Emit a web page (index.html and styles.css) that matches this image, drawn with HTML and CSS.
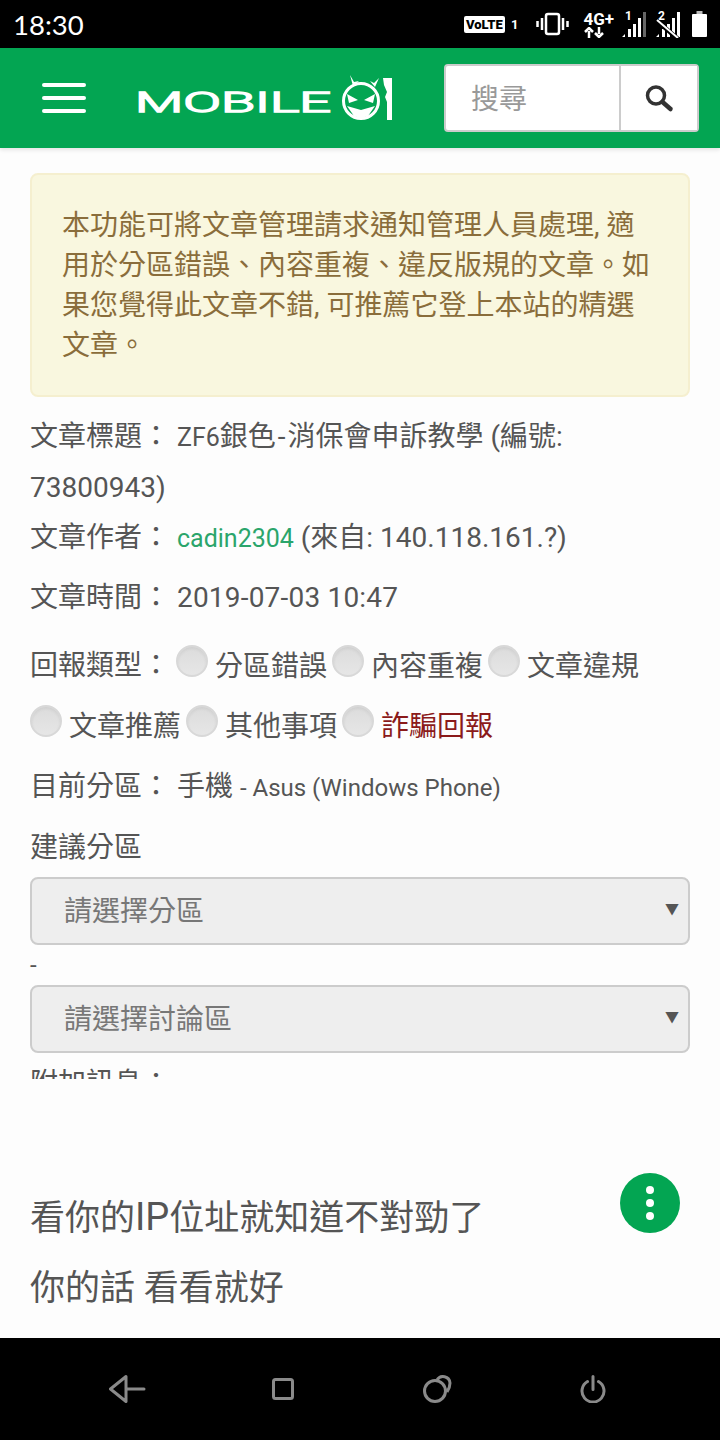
FILE: index.html
```html
<!DOCTYPE html>
<html lang="zh-Hant">
<head>
    <meta charset="UTF-8">
    <meta name="viewport" content="width=device-width, initial-scale=1.0">
    <title>文章回報</title>
    <link rel="stylesheet" href="styles.css">
</head>
<body>
    <div class="screen">
        <div class="status-bar">
            <span class="clock">18:30</span>
            <div class="status-icons">
                <span class="volte">VoLTE</span>
                <span class="sim">1</span>
                <svg class="vibrate" width="33" height="24" viewBox="0 0 33 24">
                    <rect x="10" y="2" width="13" height="20" rx="2" fill="none" stroke="#fff" stroke-width="2.5"/>
                    <path d="M6 6v12M1.500 9v6M27 6v12M31.500 9v6" stroke="#fff" stroke-width="2.500"/>
                </svg>
                <span class="net">
                    <span class="net-type">4G+</span>
                    <svg width="22" height="11" viewBox="0 0 22 11">
                        <path d="M6 11V4M2 5l4-4 4 4" fill="none" stroke="#fff" stroke-width="2.500"/>
                        <path d="M16 0v7M12 6l4 4 4-4" fill="none" stroke="#fff" stroke-width="2.500"/>
                    </svg>
                </span>
                <svg class="signal" width="24" height="28" viewBox="0 0 24 28">
                    <text class="sim-digit" x="3" y="10">1</text>
                    <path d="M0 27h3v-3zM6 27h3v-8H6zM11 27h3V14h-3zM16 27h3V8h-3z" fill="#fff"/>
                    <path d="M21 27h3V2h-3z" fill="#666"/>
                </svg>
                <svg class="signal signal-off" width="24" height="28" viewBox="0 0 24 28">
                    <text class="sim-digit" x="2" y="10">2</text>
                    <path d="M0 27h3v-3zM6 27h3v-8H6zM11 27h3V14h-3zM16 27h3V8h-3zM21 27h3V2h-3z" fill="#fff"/>
                    <path d="M1 11l21 18" stroke="#000" stroke-width="4.500"/>
                    <path d="M1 10l21 18" stroke="#fff" stroke-width="2"/>
                </svg>
                <svg class="battery" width="15" height="26" viewBox="0 0 15 26">
                    <path d="M4.500 0h6v4h-6z" fill="#bbb"/>
                    <rect y="3" width="15" height="23" rx="1" fill="#fff"/>
                </svg>
            </div>
        </div>

        <header class="site-header">
            <div class="burger"><span></span><span></span><span></span></div>
            <svg class="logo" width="258" height="46" viewBox="0 0 258 46">
                <text class="logo-word" x="-3" y="37" textLength="196" lengthAdjust="spacingAndGlyphs">MOBILE</text>
                <path d="M212 0l4 7 5-1-6 5zM241 3l-5 5-4-2 5 6z" fill="#fff"/>
                <circle cx="223" cy="26" r="17.500" fill="none" stroke="#fff" stroke-width="3"/>
                <path d="M209 19l11 6-9 3zM237 19l-11 6 9 3z" fill="#fff"/>
                <path d="M209 31l14 4 14-4-7 10q-7 3-14 0z" fill="#fff"/>
                <path d="M245 3h9v42h-5V27l-2-5 2-5-3-7z" fill="#fff"/>
            </svg>
            <form class="search">
                <input class="search-input" type="text" placeholder="搜尋">
                <button class="search-btn" type="button">
                    <svg width="30" height="30" viewBox="0 0 30 30">
                        <circle cx="12" cy="12.500" r="8.500" fill="none" stroke="#333" stroke-width="3.500"/>
                        <path d="M18.500 19l8 7" stroke="#333" stroke-width="4.500" stroke-linecap="round"/>
                    </svg>
                </button>
            </form>
        </header>

        <main class="content">
            <form class="report">
                <div class="alert">本功能可將文章管理請求通知管理人員處理, 適用於分區錯誤、內容重複、違反版規的文章。如果您覺得此文章不錯, 可推薦它登上本站的精選文章。</div>

                <div class="row"><span>文章標題：</span> <span class="small">ZF6</span>銀色<span class="wide-dash">-</span>消保會申訴教學 (編號: 73800943)</div>
                <div class="row"><span>文章作者：</span> <a class="author" href="#">cadin2304</a> (來自: 140.118.161.?)</div>
                <div class="row row-time"><span>文章時間：</span> <span class="date">2019-07-03 10:47</span></div>

                <div class="types">
                    <span class="types-label">回報類型：</span>
                    <label class="type"><input type="radio" name="type">分區錯誤</label>
                    <label class="type"><input type="radio" name="type">內容重複</label>
                    <label class="type"><input type="radio" name="type">文章違規</label>
                    <label class="type"><input type="radio" name="type">文章推薦</label>
                    <label class="type"><input type="radio" name="type">其他事項</label>
                    <label class="type type-fraud"><input type="radio" name="type">詐騙回報</label>
                </div>

                <div class="row row-board"><span>目前分區：</span> 手機 <span class="minor">- Asus (Windows Phone)</span></div>
                <div class="row row-suggest">建議分區</div>

                <div class="select-wrap">
                    <select class="select"><option>請選擇分區</option></select>
                    <span class="select-arrow">▼</span>
                </div>
                <div class="dash">-</div>
                <div class="select-wrap">
                    <select class="select"><option>請選擇討論區</option></select>
                    <span class="select-arrow">▼</span>
                </div>
                <div class="row row-extra">附加訊息：</div>
            </form>

            <div class="post">
                <p>看你的<span class="post-latin">IP</span>位址就知道不對勁了</p>
                <p>你的話 看看就好</p>
            </div>

            <button class="fab" type="button"><span></span><span></span><span></span></button>
        </main>

        <nav class="nav-bar">
            <svg width="37" height="28" viewBox="0 0 37 28">
                <path d="M17 1.500L1.500 14 17 26.500zM17 14h18" fill="none" stroke="#8a8a8a" stroke-width="3" stroke-linejoin="round" stroke-linecap="round"/>
            </svg>
            <svg width="22" height="22" viewBox="0 0 22 22">
                <rect x="1.500" y="1.500" width="19" height="19" rx="2" fill="none" stroke="#8a8a8a" stroke-width="3"/>
            </svg>
            <svg width="29" height="28" viewBox="0 0 29 28">
                <circle cx="12" cy="16" r="10.500" fill="none" stroke="#8a8a8a" stroke-width="3"/>
                <path d="M14 5a7 7 0 0 1 13 3c0 4-1 6-3 9" fill="none" stroke="#8a8a8a" stroke-width="3"/>
            </svg>
            <svg width="26" height="28" viewBox="0 0 26 28">
                <path d="M13 1.500v13M7.500 6.500a11 11 0 1 0 11 0" fill="none" stroke="#8a8a8a" stroke-width="3" stroke-linecap="round"/>
            </svg>
        </nav>
    </div>
</body>
</html>
```

FILE: styles.css
```css
* {
    box-sizing: border-box;
}

body {
    margin: 0;
    background: #000;
    font-family: Roboto, "Noto Sans CJK TC", sans-serif;
    color: #555;
}

.screen {
    display: flex;
    flex-direction: column;
    width: 720px;
    height: 1440px;
    overflow: hidden;
}

/* status bar */
.status-bar {
    display: flex;
    justify-content: space-between;
    align-items: center;
    flex: 0 0 48px;
    padding: 0 13px;
    background: #000;
    color: #fff;
}

.clock {
    font-family: Lato, sans-serif;
    font-size: 27.5px;
}

.status-icons {
    display: flex;
    align-items: center;
}

.volte {
    width: 41px;
    height: 17px;
    background: #fff;
    color: #000;
    border-radius: 2px;
    font-size: 13px;
    font-weight: 900;
    line-height: 17px;
    text-align: center;
}

.sim {
    margin-left: 6px;
    font-size: 13px;
    font-weight: 700;
}

.vibrate {
    margin-left: 18px;
}

.net {
    display: flex;
    flex-direction: column;
    align-items: flex-start;
    margin-left: 14px;
    line-height: 1;
}

.net-type {
    font-size: 17px;
    font-weight: 700;
    line-height: 16px;
}

.signal {
    margin-left: 8px;
}

.signal-off {
    margin-left: 10px;
}

.sim-digit {
    fill: #fff;
    font-size: 12px;
    font-weight: 700;
}

.battery {
    margin-left: 12px;
}

/* header */
.site-header {
    position: relative;
    display: flex;
    align-items: center;
    flex: 0 0 100px;
    padding: 0 21px 0 42px;
    background: #03a552;
    box-shadow: 0 2px 4px rgba(0,0,0,0.1);
    z-index: 1;
}

.burger {
    display: flex;
    flex-direction: column;
    gap: 9px;
    width: 44px;
}

.burger span {
    height: 4px;
    background: #fff;
    border-radius: 2px;
}

.logo {
    margin-left: 52px;
    overflow: visible;
}

.logo-word {
    font-family: Roboto, sans-serif;
    font-size: 28px;
    font-weight: 300;
    fill: #fff;
    stroke: #fff;
    stroke-width: 1.4px;
}

.search {
    display: flex;
    width: 255px;
    height: 68px;
    margin-left: auto;
    background: #fff;
    border: 2px solid #ccc;
    border-radius: 4px;
}

.search-input {
    flex: 1;
    min-width: 0;
    padding: 3px 0 0 25px;
    border: 0;
    background: transparent;
    font-family: inherit;
    font-size: 28px;
}

.search-input::placeholder {
    color: #999;
}

.search-btn {
    display: flex;
    justify-content: center;
    align-items: center;
    width: 78px;
    padding: 0;
    border: 0;
    border-left: 2px solid #ccc;
    background: #fff;
}

/* report form */
.content {
    position: relative;
    flex: 1;
    background: #fdfdfd;
}

.report {
    height: 931px;
    padding: 25px 30px 0;
    overflow: hidden;
    font-size: 28px;
}

.alert {
    padding: 31px 30px 29px;
    margin-bottom: 15px;
    background: #f9f7df;
    border: 2px solid #f5efcf;
    border-radius: 8px;
    color: #8a6d3b;
    line-height: 40px;
}

.row {
    line-height: 50px;
}

.row-time {
    margin-top: 9px;
}

.row-board {
    margin-top: 6px;
}

.row-suggest {
    margin-top: 10px;
    margin-bottom: 4px;
}

.row-extra {
    margin-top: 6px;
}

.small {
    font-size: 25px;
}

.wide-dash {
    padding: 0 2px;
}

.author {
    color: #2ba56b;
    text-decoration: none;
    font-size: 25px;
}

.date {
    letter-spacing: 0.2px;
}

.minor {
    font-size: 24px;
}

.types {
    display: flex;
    flex-wrap: wrap;
    gap: 0 5px;
    margin-top: 13px;
}

.types-label {
    margin-right: 1px;
    line-height: 60px;
}

.type {
    display: flex;
    align-items: center;
    gap: 7px;
    height: 60px;
    padding-bottom: 4px;
}

.type input {
    appearance: none;
    width: 32px;
    height: 32px;
    margin: 0 0 6px;
    background: linear-gradient(#dcdcdc, #e6e6e6);
    border: 2px solid #d8d8d8;
    border-radius: 50%;
    box-shadow: inset 0 2px 3px rgba(0,0,0,0.06);
}

.type-fraud {
    color: #8b1a1a;
}

.select-wrap {
    position: relative;
}

.select {
    appearance: none;
    display: block;
    width: 100%;
    height: 68px;
    padding: 0 32px;
    background: #eee;
    border: 2px solid #ccc;
    border-radius: 8px;
    color: #777;
    font-family: inherit;
    font-size: 28px;
}

.select-arrow {
    position: absolute;
    top: 20px;
    right: 11px;
    color: #555;
    font-size: 14px;
    line-height: 24px;
}

.dash {
    height: 40px;
    line-height: 40px;
    font-size: 24px;
}

/* post text */
.post {
    padding: 103px 30px 0;
    font-size: 35px;
    line-height: 70px;
}

.post p {
    margin: 0;
}

.post-latin {
    font-size: 38px;
}

.fab {
    position: absolute;
    top: 1025px;
    left: 620px;
    display: flex;
    flex-direction: column;
    justify-content: center;
    align-items: center;
    gap: 5px;
    width: 60px;
    height: 60px;
    padding: 0;
    border: 0;
    border-radius: 50%;
    background: #03a552;
}

.fab span {
    width: 8px;
    height: 8px;
    background: #fff;
    border-radius: 50%;
}

/* bottom nav */
.nav-bar {
    display: grid;
    grid-template-columns: repeat(4, 1fr);
    justify-items: center;
    align-items: center;
    flex: 0 0 102px;
    padding: 0 50px;
    background: #000;
}
```
